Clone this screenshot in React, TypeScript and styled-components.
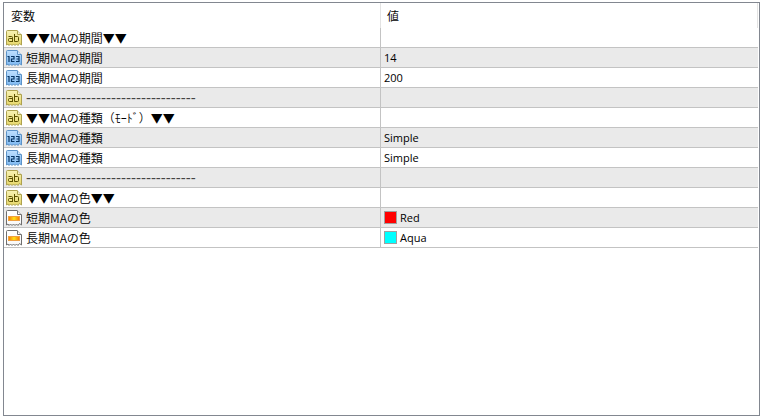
import React from "react";
import styled, { createGlobalStyle } from "styled-components";

const GlobalStyle = createGlobalStyle`
  *, *::before, *::after { box-sizing: border-box; }
  html, body, #root { height: 100%; }
  body {
    margin: 0;
    background: #fff;
    color: #000;
    font-family: "Noto Sans CJK JP", sans-serif;
    font-size: 12px;
    font-weight: 350;
    line-height: 18px;
  }
`;

const Page = styled.main`
  height: 100%;
  padding: 2px 4px 3px 3px;
`;

const Panel = styled.section`
  height: 100%;
  border: 1px solid #828790;
  padding-right: 1px;
  overflow: auto;
  background: #fff;
`;

const Table = styled.table`
  width: 100%;
  table-layout: fixed;
  border-collapse: separate;
  border-spacing: 0;
`;

const HeadCell = styled.th`
  height: 25px;
  padding: 0 7px;
  text-align: left;
  font-weight: 350;
  background: linear-gradient(#e3e3e3, #e3e3e3) right top / 1px 100% no-repeat;

  & + & {
    padding-left: 6px;
  }
`;

const Row = styled.tr`
  height: 20px;
  background: #fff;
  &:nth-child(even) { background: #eaeaea; }
`;

const Cell = styled.td`
  height: 20px;
  padding: 0 3px;
  border-bottom: 1px solid #c3c3c3;
  white-space: nowrap;
  &:first-child {
    padding: 0 1px;
    border-right: 1px solid #c3c3c3;
  }
`;

const Content = styled.div`
  display: flex;
  align-items: center;
  gap: 3px;
  height: 19px;
`;

const Label = styled.span`
  color: #000;
`;

const Value = styled.span`
  font-family: "Open Sans", sans-serif;
  font-size: 11px;
  font-weight: 400;
`;

const Dashes = styled.span`
  font-family: "Liberation Sans", sans-serif;
  font-size: 15px;
  color: #444;
`;

const Swatch = styled.span<{ $color: string }>`
  width: 13px;
  height: 13px;
  border: 1px solid #a0a0a0;
  background: ${(p) => p.$color};
`;

const Icon = styled.svg`
  flex: none;
  width: 18px;
  height: 18px;
`;

type Kind = "text" | "number" | "color";

const TORN =
  "M1.500 2.500q0-1 1-1H12l4.500 4.500V16l-2-1.500-1.500 2-1.500-1.500-1.500 1.500L8.500 15 7 16.500 5.500 15 4 16.500 3 15 1.500 16Z";

const TONES = {
  text: { from: "#f8f2b4", to: "#e6d76a", line: "#aea24e", ink: "#5a5000" },
  number: { from: "#bfe0ff", to: "#7db7f0", line: "#5c93c8", ink: "#073563" },
  color: { from: "#ffffff", to: "#f8f8f8", line: "#6f6f6f", ink: "#000000" },
};

function TypeIcon({ kind }: { kind: Kind }) {
  const t = TONES[kind];
  const id = React.useId();
  return (
    <Icon viewBox="0 0 18 18" aria-hidden="true">
      <defs>
        <linearGradient id={id + "p"} x1="0" y1="0" x2="0" y2="1">
          <stop offset="0" stopColor={t.from} />
          <stop offset="1" stopColor={t.to} />
        </linearGradient>
        <linearGradient id={id + "s"}>
          <stop offset="0" stopColor="#f57900" />
          <stop offset="0.5" stopColor="#ffe21a" />
          <stop offset="1" stopColor="#f57900" />
        </linearGradient>
      </defs>
      <path d={TORN} fill={`url(#${id}p)`} stroke={t.line} />
      <path d="M12.500 1.500v4h4" fill="#fff" fillOpacity="0.5" stroke={t.line} />
      {kind === "text" && (
        <g fill="none" stroke={t.ink}>
          <path d="M3.500 7.500h3q1 0 1 1v4.500M7.500 9.500H4.500q-1 0-1 1v1q0 1 1 1h3" />
          <path d="M9.500 5v7.500h3q1 0 1-1v-3q0-1-1-1h-3" />
        </g>
      )}
      {kind === "number" && (
        <g fill="none" stroke={t.ink} strokeWidth="1.200">
          <path d="M2.500 7.500h1.500V13" />
          <path d="M6 7.500h3V10H6.500v2.500h3" />
          <path d="M11 7.500h3v5h-3M11.500 10h2.500" />
        </g>
      )}
      {kind === "color" && (
        <rect x="3.500" y="7.500" width="11" height="4" fill={`url(#${id}s)`} stroke="#f0a040" />
      )}
    </Icon>
  );
}

interface Variable {
  kind: Kind;
  label: React.ReactNode;
  value?: string;
  swatch?: string;
}

const divider = <Dashes>{"-".repeat(34)}</Dashes>;

const VARIABLES: Variable[] = [
  { kind: "text", label: "▼▼MAの期間▼▼" },
  { kind: "number", label: "短期MAの期間", value: "14" },
  { kind: "number", label: "長期MAの期間", value: "200" },
  { kind: "text", label: divider },
  { kind: "text", label: "▼▼MAの種類（ﾓｰﾄﾞ）▼▼" },
  { kind: "number", label: "短期MAの種類", value: "Simple" },
  { kind: "number", label: "長期MAの種類", value: "Simple" },
  { kind: "text", label: divider },
  { kind: "text", label: "▼▼MAの色▼▼" },
  { kind: "color", label: "短期MAの色", value: "Red", swatch: "#ff0000" },
  { kind: "color", label: "長期MAの色", value: "Aqua", swatch: "#00ffff" },
];

export default function App() {
  return (
    <>
      <GlobalStyle />
      <Page>
        <Panel>
          <Table>
            <thead>
              <tr>
                <HeadCell scope="col">変数</HeadCell>
                <HeadCell scope="col">値</HeadCell>
              </tr>
            </thead>
            <tbody>
              {VARIABLES.map((v, i) => (
                <Row key={i}>
                  <Cell>
                    <Content>
                      <TypeIcon kind={v.kind} />
                      <Label>{v.label}</Label>
                    </Content>
                  </Cell>
                  <Cell>
                    <Content>
                      {v.swatch && <Swatch $color={v.swatch} />}
                      {v.value && <Value>{v.value}</Value>}
                    </Content>
                  </Cell>
                </Row>
              ))}
            </tbody>
          </Table>
        </Panel>
      </Page>
    </>
  );
}
